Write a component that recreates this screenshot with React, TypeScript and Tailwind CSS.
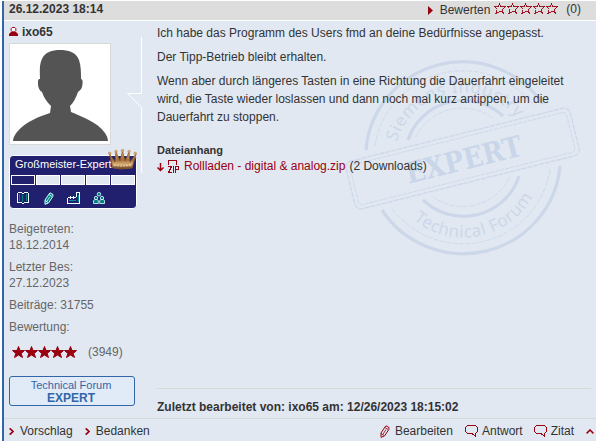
import type { ReactNode } from "react";

const STAR =
  "M6.5 0.5 L8 4.5 L12.5 4.5 L9.2 7.5 L10.5 11.5 L6.5 9 L2.5 11.5 L3.8 7.5 L0.5 4.5 L5 4.5 Z";

const Stars = ({ filled }: { filled?: boolean }) => (
  <svg
    width="66"
    height="13"
    viewBox="0 0 66 13"
    className="shrink-0"
    shapeRendering={filled ? "auto" : "crispEdges"}
  >
    {[0, 1, 2, 3, 4].map((i) => (
      <path
        key={i}
        d={STAR}
        transform={`translate(${i * 13} 0)`}
        fill={filled ? "#990010" : "none"}
        stroke="#990010"
        strokeWidth={filled ? 1 : 0.9}
      />
    ))}
  </svg>
);

const Chevron = () => (
  <svg width="5" height="7" viewBox="0 0 5 7" className="shrink-0">
    <path d="M0.7 0.3 L4 3.5 L0.7 6.7" fill="none" stroke="#990010" strokeWidth="1.7" />
  </svg>
);

const Bubble = () => (
  <svg width="13" height="12" viewBox="0 0 13 12" className="shrink-0" shapeRendering="crispEdges">
    <path
      d="M2.5 0.5 H10.5 L12.5 2.5 V6.5 L10.5 8.5 V11.5 L7 8.5 H2.5 L0.5 6.5 V2.5 Z"
      fill="none"
      stroke="#990010"
    />
  </svg>
);

const Pencil = ({ color, fill = "none" }: { color: string; fill?: string }) => (
  <svg width="10" height="13" viewBox="0 0 10 13" className="shrink-0">
    <path
      d="M6 0.8 L9 2.5 L8.8 4.5 L4.5 11 L1 12.3 L1 8 L5 2 Z"
      fill={fill}
      stroke={color}
    />
    <path d="M5 2.5 L8 4.5 M6 4.5 L2.5 10 M1 8.5 L4 10.5" stroke={color} strokeWidth="0.8" />
  </svg>
);

const Stamp = () => (
  <svg
    width="250"
    height="220"
    viewBox="340 40 250 220"
    className="pointer-events-none absolute left-[336px] top-[39px]"
    fill="none"
    stroke="#ccd8e9"
  >
    <g strokeWidth="3.2">
      <path d="M366 150 A97 96 0 0 1 543 104" />
      <path d="M560 166 A97 96 0 0 1 382 210" />
      <path d="M408 140 A58 57 0 0 1 503 116" />
      <path d="M519 176 A58 57 0 0 1 423 200" />
    </g>
    <g strokeWidth="0.9" strokeDasharray="5 1.5">
      <path d="M375 146 A89 88 0 0 1 535 107" />
      <path d="M550 169 A88 87 0 0 1 391 207" />
      <path d="M416 137 A51 50 0 0 1 494 119" />
      <path d="M509 178 A51 50 0 0 1 433 197" />
    </g>
    <g transform="rotate(-14 462.5 158.5)">
      <rect x="347" y="134" width="231" height="49" rx="6" strokeWidth="1.3" strokeDasharray="5 1" />
      <rect x="351" y="138" width="223" height="41" rx="4" strokeWidth="0.9" strokeDasharray="4 1" />
      <text
        x="404"
        y="170"
        textLength="119"
        lengthAdjust="spacingAndGlyphs"
        stroke="none"
        fill="#c9d6e9"
        fontFamily="DejaVu Serif, serif"
        fontWeight="bold"
        fontSize="29"
      >
        EXPERT
      </text>
    </g>
    <path id="arcTop" d="M396 145 A69 69 0 0 1 530 145" stroke="none" />
    <path id="arcBottom" d="M388 182 A79 79 0 0 0 542 167" stroke="none" />
    <g fill="#ccd8e9" stroke="none" fontFamily="Noto Sans, sans-serif" fontSize="17">
      <text>
        <textPath href="#arcTop" startOffset="3" textLength="150">
          Siemens Industry
        </textPath>
      </text>
      <text>
        <textPath href="#arcBottom" startOffset="46" textLength="138">
          Technical Forum
        </textPath>
      </text>
    </g>
  </svg>
);

const Crown = () => (
  <svg
    width="29"
    height="21"
    viewBox="0 0 29 21"
    className="absolute left-[98px] -top-[7px]"
  >
    <defs>
      <linearGradient id="gold" x1="0" y1="0" x2="0" y2="1">
        <stop offset="0" stopColor="#d9ae78" />
        <stop offset="0.5" stopColor="#a66f3a" />
        <stop offset="0.75" stopColor="#d9b07a" />
        <stop offset="1" stopColor="#5a3215" />
      </linearGradient>
    </defs>
    <path
      d="M5 19 L1.5 5 L7 13 L8 3 L12 12 L14.5 2 L17 12 L21 3 L22 13 L28 5 L24 19 Q14 21 5 19 Z"
      fill="url(#gold)"
      stroke="#8e5c2b"
      strokeWidth="0.8"
    />
    <path d="M6 16 Q14 18 23 16" stroke="#f3dcae" fill="none" strokeDasharray="2 1" />
    <g fill="#d8a975" stroke="#a9753d" strokeWidth="0.4">
      <circle cx="1.7" cy="4.3" r="1.3" />
      <circle cx="8" cy="2.5" r="1.3" />
      <circle cx="14.5" cy="1.7" r="1.4" />
      <circle cx="21" cy="2.5" r="1.3" />
      <circle cx="27.2" cy="4.3" r="1.3" />
    </g>
  </svg>
);

const RankBadge = () => (
  <div className="relative mt-[10px] h-[54px] w-[128px] rounded-[4px] border border-white bg-[#20206e]">
    <div className="h-[19px] pl-[5px] font-['Liberation_Sans',sans-serif] text-[11px] leading-[17px] whitespace-nowrap text-white">
      Großmeister-Experte
    </div>
    <div className="flex gap-px px-px">
      <div className="h-[10px] w-6 border border-white" />
      <div className="h-[10px] w-6 border border-white bg-[#e1e8f2]" />
      <div className="h-[10px] w-6 border border-white bg-[#e1e8f2]" />
      <div className="h-[10px] w-6 border border-white bg-[#e1e8f2]" />
      <div className="h-[10px] w-6 border border-white bg-[#e1e8f2]" />
    </div>
    <div className="mt-[7px] flex items-start pl-[7px]">
      <svg width="12" height="12" viewBox="0 0 12 12" fill="none" className="mr-[15px]" shapeRendering="crispEdges">
        <path d="M5.5 3 V10 M2.5 2 V9 M9.5 2 V9" stroke="#008080" />
        <path d="M0.5 10.5 V1.5 L1.5 0.5 H4.5 L6 2 L7.5 0.5 H10.5 L11.5 1.5 V10.5 H7.5 L6 11.5 L4.5 10.5 Z" stroke="#e9ffff" />
      </svg>
      <Pencil color="#d8ffff" fill="#008080" />
      <svg width="13" height="12" viewBox="0 0 13 12" className="ml-[13px]" shapeRendering="crispEdges">
        <path d="M0.5 11.5 V6.5 L3.5 4.5 V6.5 L6.5 4.5 V6.5 L9.5 4.5 V0.5 H12.5 V11.5 Z" fill="#20206e" stroke="#e9ffff" />
        <path d="M2 8.5 H9 M11 3 V10" stroke="#009090" />
      </svg>
      <svg width="12" height="12" viewBox="0 0 12 12" className="ml-[13px]">
        <g fill="#008080" stroke="#d8ffff" strokeWidth="0.8">
          <circle cx="6" cy="2.2" r="1.8" />
          <circle cx="3" cy="6" r="1.7" />
          <circle cx="9" cy="6" r="1.7" />
          <path d="M0.5 11.5 V8.5 L2 7.5 H4 L5.3 8.5 V11.5 Z M6.7 11.5 V8.5 L8 7.5 H10 L11.5 8.5 V11.5 Z" />
        </g>
      </svg>
    </div>
    <Crown />
  </div>
);

const Avatar = () => (
  <div className="mt-[3px] h-[102px] w-[102px] border border-[#d9d9d9] bg-white">
    <svg width="100" height="100" viewBox="10 44 100 100">
      <path
        d="M60 50 C68 50 76 52 79 60 C81 66 81 72 81 79 C83 79 83 83 82 87 C81 90 79 91 78 92 C76 98 73 103 70 106 L71 112 C82 117 96 121 105 133 Q108 137 108 141 H13 Q13 137 17 132 C26 121 39 117 50 113 L51 106 C47 102 44 98 42 92 C40 91 38 88 38 84 C38 80 38 79 40 79 C40 72 39 65 42 59 C45 52 52 50 60 50 Z"
        fill="#545454"
      />
    </svg>
  </div>
);

const Action = ({ icon, children }: { icon: ReactNode; children: ReactNode }) => (
  <span className="flex items-center">
    {icon}
    {children}
  </span>
);

const App = () => {
  return (
    <div className="h-[442px] w-[597px] bg-white pt-px pl-0.5 font-['Liberation_Sans',sans-serif] text-xs text-[#333]">
      <div className="relative flex h-[440px] w-[594px] flex-col border-l-2 border-[#3366a8] bg-[#e1e8f2]">
        <Stamp />
        <div className="relative flex h-5 shrink-0 items-center border-b border-white bg-[#ddd] pr-[15px] pl-[5px]">
          <b className="-mt-[3px]">26.12.2023 18:14</b>
          <svg width="5" height="9" viewBox="0 0 5 9" className="ml-auto -mt-px">
            <path d="M0 0 L5 4.5 L0 9 Z" fill="#990010" />
          </svg>
          <span className="-mt-[2px] mr-[3px] ml-[7px]">Bewerten</span>
          <span className="-mt-[4px]">
            <Stars />
          </span>
          <span className="ml-[7px] -mt-[3px]">(0)</span>
        </div>

        <div className="relative flex flex-1">
          <div className="flex w-[148px] shrink-0 flex-col pl-[5px] text-[#666]">
            <div className="mt-[3px] flex h-4 items-center font-bold text-[#333]">
              <svg width="9" height="9" viewBox="0 0 9 9" className="mr-1 -mt-[2px]">
                <path d="M3.2 0.5 H5.8 L6.8 1.6 V3.6 L5.8 4.8 H3.2 L2.2 3.6 V1.6 Z" fill="#fff" stroke="#990010" />
                <path d="M0 9 V7 L2 5 H7 L9 7 V9 Z" fill="#990010" />
              </svg>
              ixo65
            </div>
            <Avatar />
            <RankBadge />
            <div className="mt-3 leading-4">
              Beigetreten:
              <br />
              18.12.2014
            </div>
            <div className="mt-[6px] leading-4">
              Letzter Bes:
              <br />
              27.12.2023
            </div>
            <div className="mt-[6px] leading-4">Beiträge: 31755</div>
            <div className="mt-[6px] leading-4">Bewertung:</div>
            <div className="mt-[9px] flex h-4 items-center pl-[3px]">
              <Stars filled />
              <span className="ml-[10px]">(3949)</span>
            </div>
            <div className="mt-4 h-[30px] w-[126px] rounded-[3px] border border-[#3366a8] bg-[#e1ebf7] pt-[2px] pr-[2px] text-center text-[11px] leading-[13px] text-[#3366a8]">
              Technical Forum
              <div className="text-xs leading-[12px] font-bold">EXPERT</div>
            </div>
          </div>

          <svg width="16" height="136" viewBox="0 0 16 136" className="absolute left-[122px] top-4">
            <path d="M15.5 0 V56.5 H1.5 L15.5 70.5 V136" fill="none" stroke="#fff" />
          </svg>

          <div className="flex flex-1 flex-col pt-[3px] pl-[5px] leading-[18px]">
            <p>Ich habe das Programm des Users fmd an deine Bedürfnisse angepasst.</p>
            <p className="mt-[6px]">Der Tipp-Betrieb bleibt erhalten.</p>
            <p className="mt-[6px]">
              Wenn aber durch längeres Tasten in eine Richtung die Dauerfahrt eingeleitet
              <br />
              wird, die Taste wieder loslassen und dann noch mal kurz antippen, um die
              <br />
              Dauerfahrt zu stoppen.
            </p>
            <b className="mt-4 text-[11px] leading-4">Dateianhang</b>
            <div className="flex h-4 items-center">
              <svg width="23" height="13" viewBox="0 0 23 13" fill="none" stroke="#990010" className="mr-1">
                <path d="M3.5 3 V11 M0.5 7.5 L3.5 10.5 L6.5 7.5" strokeWidth="1.5" />
                <path
                  d="M11.5 5 V0.5 H19.5 V5 M11 6.5 H14.5 L11.5 12.5 H15 M16.5 6 V13 M18.5 13 V6.5 H21.5 V9.5 H18.5"
                  shapeRendering="crispEdges"
                />
              </svg>
              <a className="text-[#990010]">Rollladen - digital &amp; analog.zip</a>
              <span className="ml-1">(2 Downloads)</span>
            </div>
            <div className="mt-auto mr-[5px] h-[30px] border-t border-[#d9d9d9] pt-[9px] font-bold">
              Zuletzt bearbeitet von: ixo65 am: 12/26/2023 18:15:02
            </div>
          </div>
        </div>

        <div className="relative flex h-[23px] shrink-0 items-center border-t border-[#d9d9d9] pt-[2px] pr-[2px] pl-[5px]">
          <div className="flex gap-[12px]">
            <Action icon={<span className="mr-[6px]"><Chevron /></span>}>Vorschlag</Action>
            <Action icon={<span className="mr-[6px]"><Chevron /></span>}>Bedanken</Action>
          </div>
          <div className="ml-auto flex items-center">
            <span className="mr-[12px]">
              <Action icon={<span className="mr-[5px]"><Pencil color="#990010" /></span>}>Bearbeiten</Action>
            </span>
            <span className="mr-[11px]">
              <Action icon={<span className="mr-1"><Bubble /></span>}>Antwort</Action>
            </span>
            <span className="mr-[12px]">
              <Action icon={<span className="mr-1"><Bubble /></span>}>Zitat</Action>
            </span>
            <svg width="8" height="5" viewBox="0 0 8 5">
              <path d="M0.6 4.4 L4 1 L7.4 4.4" fill="none" stroke="#990010" strokeWidth="1.5" />
            </svg>
          </div>
        </div>
      </div>
    </div>
  );
};

export default App;
